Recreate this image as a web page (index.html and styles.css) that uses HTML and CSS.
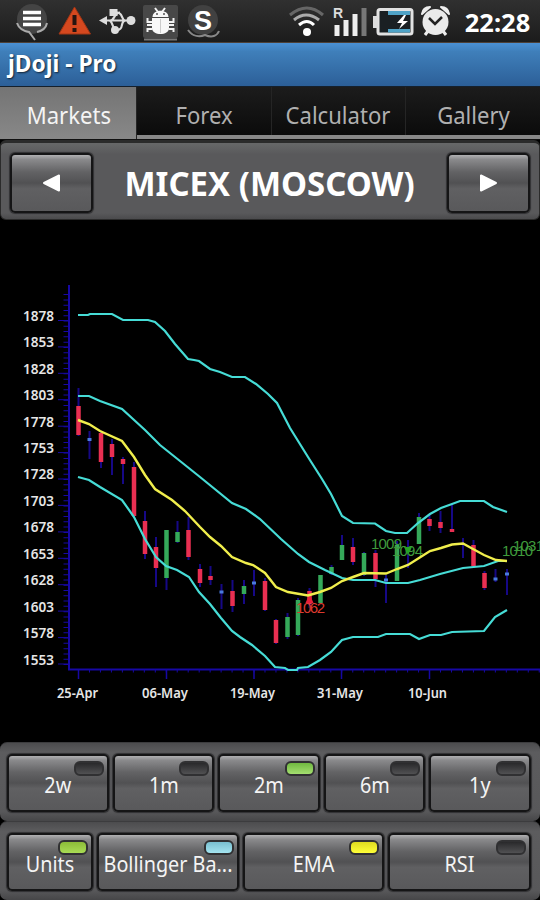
FILE: index.html
```html
<!DOCTYPE html>
<html lang="en">

<head>
    <meta charset="UTF-8">
    <meta name="viewport" content="width=device-width, initial-scale=1.0">
    <title>jDoji - Pro</title>
    <link rel="stylesheet" href="styles.css">
</head>

<body>
    <div class="status-bar">
        <svg class="status-icons" width="240" height="42" viewBox="0 0 240 42">
            <!-- message -->
            <circle cx="32" cy="19" r="15" fill="#444"/>
            <path d="M23 12.500h18M23 18.500h18M23 24.500h18" stroke="#fff" stroke-width="3.500"/>
            <path d="M17 23c2 6 6 8 12 9l6 8M47 23c-1 5-5 8-10 9" fill="none" stroke="#aaa" stroke-width="2"/>
            <!-- warning -->
            <path d="M74.500 7L90.500 34H59z" fill="#d5481f" stroke="#a33614" stroke-linejoin="round"/>
            <path d="M74.500 15v10M74.500 28v4" stroke="#281410" stroke-width="4"/>
            <!-- usb -->
            <path d="M103 20.500h28M110 20.500c5 0 4-8 10-8M109 20.500c4 0 3 9.500 8 9.500c8 0 2-9 9-9.500M117 12.500c6 0 4 7 8 8" fill="none" stroke="#ddd" stroke-width="2.200"/>
            <path d="M99 20.500l8-4.500v9z" fill="#ddd"/>
            <rect x="109.500" y="9" width="8" height="7" fill="#ddd"/>
            <circle cx="115" cy="30" r="4" fill="#ddd"/>
            <circle cx="131" cy="20.500" r="4.500" fill="#ddd"/>
            <!-- debugging -->
            <rect x="143" y="5" width="35" height="33" rx="2" fill="#484848"/>
            <path d="M144 39.500h33" stroke="#777" stroke-width="2"/>
            <path d="M155 8l3 4M165 8l-3 4M147.500 18v4h5M147 25h5M147.500 32v-3h5M173.500 18v4h-5M174 25h-5M173.500 32v-3h-5" fill="none" stroke="#f4f4f4" stroke-width="2"/>
            <path d="M152.500 17c0-8.500 16-8.500 16 0zM152 18h17v10c0 8-17 8-17 0z" fill="#f8f8f8"/>
            <path d="M160.500 19v14" stroke="#ccc"/>
            <circle cx="157" cy="14" r="1" fill="#555"/><circle cx="164" cy="14" r="1" fill="#555"/>
            <!-- skype -->
            <circle cx="203" cy="20" r="15" fill="#414141"/>
            <path d="M188 30c5 7 12 7 17 5 7 3 12 1 14-4" fill="none" stroke="#888" stroke-width="2"/>
            <text x="203" y="30" class="skype" text-anchor="middle">S</text>
        </svg>
        <svg class="status-icons" width="170" height="42" viewBox="285 0 170 42">
            <!-- wifi -->
            <g fill="none" stroke-width="3">
                <path d="M290 15q17-14 33 0" stroke="#666"/>
                <path d="M294 20q12-10 25 0" stroke="#aaa"/>
                <path d="M299 25q8-7 15 0" stroke="#fff"/>
            </g>
            <circle cx="307" cy="32" r="4" fill="#fff"/>
            <!-- signal -->
            <text x="333" y="18" class="roaming">R</text>
            <path d="M337 25v11M346 20v16M355 14v22" stroke="#eee" stroke-width="5"/>
            <path d="M364 8v28" stroke="#777" stroke-width="5"/>
            <!-- battery -->
            <rect x="378" y="9.500" width="34" height="24.500" rx="2" fill="#1a2023" stroke="#e2e2e2" stroke-width="3"/>
            <path d="M378 16h-5v12h5" fill="#ddd"/>
            <path d="M388 11h22v4h-22zM388 29h22v3.500h-22z" fill="#4fa3c7"/>
            <path d="M404 15l-7 8h5l-3 6 9-8h-5l3-6z" fill="#fff"/>
            <!-- alarm -->
            <path d="M422 14q1-7 8-7zM449 14q-1-7-8-7z" fill="#eee" stroke="#eee" stroke-width="2" stroke-linejoin="round"/>
            <path d="M428 31l-3 4M443 31l3 4" stroke="#eee" stroke-width="3"/>
            <circle cx="435.500" cy="22" r="13" fill="#eaeaea"/>
            <path d="M429 18l6 6 7-7" fill="none" stroke="#222" stroke-width="2.500"/>
        </svg>
        <span class="clock">22:28</span>
    </div>

    <div class="title-bar"><span>jDoji - Pro</span></div>

    <nav class="tabs">
        <a class="tab active"><span>Markets</span></a>
        <a class="tab"><span>Forex</span></a>
        <a class="tab"><span>Calculator</span></a>
        <a class="tab"><span>Gallery</span></a>
    </nav>

    <header class="market">
        <button class="btn arrow">
            <svg width="22" height="20" viewBox="0 0 22 20"><path d="M3 10L18 2.500v15z"/></svg>
        </button>
        <h1><span>MICEX (MOSCOW)</span></h1>
        <button class="btn arrow">
            <svg width="22" height="20" viewBox="0 0 22 20"><path d="M19 10L4 2.500v15z"/></svg>
        </button>
    </header>

    <svg class="chart" width="540" height="522" viewBox="0 220 540 522">
        <!-- axes -->
        <g class="axis">
            <path d="M69 285V669.500H540" stroke-width="2"/>
            <path d="M58 320.500h11M58 346.900h11M58 373.300h11M58 399.700h11M58 426.200h11M58 452.600h11M58 479h11M58 505.400h11M58 531.900h11M58 558.300h11M58 584.700h11M58 611.100h11M58 637.600h11M58 664h11"/>
            <path d="M66 294.100V669" stroke-width="5" stroke-dasharray="1 4.284"/>
            <path d="M78.500 670v9M166.500 670v9M254 670v9M341.500 670v9M429.500 670v9" stroke-width="1.500"/>
            <path d="M78 671H540" stroke-width="3" stroke-dasharray="1 9.970"/>
        </g>
        <g class="labels">
            <text x="23" y="320.500" textLength="31" lengthAdjust="spacingAndGlyphs">1878</text>
            <text x="23" y="347" textLength="31" lengthAdjust="spacingAndGlyphs">1853</text>
            <text x="23" y="373.500" textLength="31" lengthAdjust="spacingAndGlyphs">1828</text>
            <text x="23" y="400" textLength="31" lengthAdjust="spacingAndGlyphs">1803</text>
            <text x="23" y="426.500" textLength="31" lengthAdjust="spacingAndGlyphs">1778</text>
            <text x="23" y="453" textLength="31" lengthAdjust="spacingAndGlyphs">1753</text>
            <text x="23" y="479" textLength="31" lengthAdjust="spacingAndGlyphs">1728</text>
            <text x="23" y="505.500" textLength="31" lengthAdjust="spacingAndGlyphs">1703</text>
            <text x="23" y="532" textLength="31" lengthAdjust="spacingAndGlyphs">1678</text>
            <text x="23" y="558.500" textLength="31" lengthAdjust="spacingAndGlyphs">1653</text>
            <text x="23" y="584.500" textLength="31" lengthAdjust="spacingAndGlyphs">1628</text>
            <text x="23" y="611.500" textLength="31" lengthAdjust="spacingAndGlyphs">1603</text>
            <text x="23" y="637.500" textLength="31" lengthAdjust="spacingAndGlyphs">1578</text>
            <text x="23" y="664.500" textLength="31" lengthAdjust="spacingAndGlyphs">1553</text>
            <text x="57" y="698" textLength="41" lengthAdjust="spacingAndGlyphs">25-Apr</text>
            <text x="142" y="698" textLength="46" lengthAdjust="spacingAndGlyphs">06-May</text>
            <text x="230" y="698" textLength="45" lengthAdjust="spacingAndGlyphs">19-May</text>
            <text x="317" y="698" textLength="46" lengthAdjust="spacingAndGlyphs">31-May</text>
            <text x="408" y="698" textLength="39" lengthAdjust="spacingAndGlyphs">10-Jun</text>
        </g>

        <!-- candles -->
        <path class="wick" d="M78.500 388v48M89.500 431v28M101 432v36M112 439v36M123 457v27M134 462v56M145 511v48M156 537v50M166.500 530v60M177.500 521v22M188.500 517v43M200 564v23M210.500 566v19M221.500 584v25M232.500 580v32M244 580v24M254 570v26M265 578v33M276 619v25M287.500 613v26M298 598v38M309.500 588v20M320.500 575v29M331.500 565v10M342 535v25M353 538v27M364 552v24M375.500 550v37M386 575v28M397 541v40M408 540v28M419 513v31M429.500 515v16M440.500 511v22M452 504v28M463 538v20M473.500 540v28M484.500 571v19M495.500 569v13M507 569v26"/>
        <path class="down" d="M78.500 406v29M101 433v29M112 444v13M123 459v5M134 467v49M145 521v33M156 547v21M188.500 530v27M200 569v14M210.500 576v4M232.500 591v15M265 581v29M276 620v23M309.500 591v13M353 547v15M375.500 553v26M429.500 519v7M440.500 522v6M452 529v3M473.500 545v21M484.500 573v15"/>
        <path class="up" d="M166.500 530v48M177.500 532v10M244 586v8M287.500 617v20M298 600v35M320.500 575v28M331.500 567v7M342 545v15M364 553v22M397 545v36M408 547v5M419 517v27"/>
        <path class="flat" d="M87.500 439.500h4M219.500 592h4M252 583h4M384 580h4M493.500 579h4M505 574h4"/>

        <!-- signals -->
        <g class="signal">
            <text x="371" y="549" textLength="31">1009</text>
            <text x="392" y="556" textLength="31">1094</text>
            <text x="502" y="556" textLength="31">1010</text>
            <text x="513" y="551" textLength="31">1031</text>
            <text class="sell" x="296" y="613" textLength="29">1062</text>
        </g>
        <path d="M309.500 594l-4 9h8z" fill="#e5203a"/>
        <path d="M408 555l-4-8h8z" fill="#25a225"/>

        <!-- bollinger bands -->
        <g class="band">
            <polyline points="78,315 88,315 90,314 112,314 123,320 148,320 155,322 165,331 175,344 188,359 194,360 199,361 210,369 220,372 232,377 245,377 256,384 268,394 277,403 290,428 308,457 322,479 331,494 342,516 353,523 375,523.500 386,531 395,533 407,533 418,523 430,514 441,508 452,504 460,501 484,501 493,507 507,512"/>
            <polyline points="78,396 89,396 100,401 122,409 133,419 145,430 160,445 180,461 200,477 232,503 246,509 260,519 281,539 298,554 309,562 325,570 342,578 353,580 375,580 386,583 408,583 420,580 440,574 463,568 484,566 498,561 507,561"/>
            <polyline points="78,477 89,480 100,487 122,500 134,517 145,539 156,557 166,566 177,570 189,577 199,592 210,604 221,618 232,631 240,637 252,645 265,656 275,667 285,668 288,670 297,670 298,668 308,667 320,660 331,652 342,640 353,637 378,637 386,634 410,634 419,639 430,635 441,635 452,632 484,631 495,617 507,610"/>
        </g>
        <polyline class="ema" points="78,420 89,424 100,431 122,441 134,457 145,475 155,489 172,500 185,511 200,527 210,537 221,546 232,557 246,563 253,565 265,573 276,587 288,592 308,595.500 320,592 331,588 342,581 353,577 364,573 386,573.500 397,569 408,565 419,558 430,551 441,548 452,544.500 463,543.500 473,549 484,555 496,560 507,561"/>
    </svg>

    <div class="panel range">
        <button class="btn"><i class="led"></i><span>2w</span></button>
        <button class="btn"><i class="led"></i><span>1m</span></button>
        <button class="btn"><i class="led green"></i><span>2m</span></button>
        <button class="btn"><i class="led"></i><span>6m</span></button>
        <button class="btn"><i class="led"></i><span>1y</span></button>
    </div>
    <div class="panel overlays">
        <button class="btn"><i class="led lime"></i><span>Units</span></button>
        <button class="btn"><i class="led blue"></i><span>Bollinger Ba...</span></button>
        <button class="btn"><i class="led yellow"></i><span>EMA</span></button>
        <button class="btn"><i class="led"></i><span>RSI</span></button>
    </div>
</body>

</html>
```
FILE: styles.css
```css
* {
    box-sizing: border-box;
}

body {
    margin: 0;
    width: 540px;
    height: 900px;
    overflow: hidden;
    background-color: #000;
    color: #f2f2f2;
    font-family: "Noto Sans", "Open Sans", sans-serif;
}

/* Labels are set slightly condensed */
span {
    display: inline-block;
    white-space: nowrap;
    transform: scaleX(0.92);
}

.status-bar {
    display: flex;
    align-items: center;
    height: 42px;
    padding-right: 10px;
    background: linear-gradient(#303030, #1c1c1c);
}

.status-icons {
    flex-shrink: 0;
}

.status-icons + .status-icons {
    margin-left: 45px;
}

.skype {
    font: bold 27px "Liberation Sans", sans-serif;
    fill: #fff;
}

.roaming {
    font: bold 14px "Liberation Sans", sans-serif;
    fill: #ddd;
}

.clock {
    margin-left: auto;
    font-size: 25px;
    font-weight: bold;
    line-height: 42px;
    color: #fff;
    transform: translateY(1px) scaleX(1.02);
    transform-origin: right;
}

.title-bar {
    height: 45px;
    padding-left: 8px;
    border-top: 1px solid #4c4038;
    border-bottom: 1px solid #15202c;
    background: linear-gradient(#4a90d4, #3f7fba 20%, #2c5f98);
    font-size: 23px;
    font-weight: bold;
    line-height: 41px;
    color: #fff;
    text-shadow: 1px 1px 2px #123;
}

.title-bar span {
    transform: scaleX(0.99);
    transform-origin: left;
}

.tabs {
    display: flex;
    height: 53px;
    border-bottom: 1px solid #111;
    background-color: #888;
}

.tab {
    flex: 1;
    height: 48px;
    border-right: 1px solid #252525;
    background: linear-gradient(#1c1c1c, #0b0b0b);
    font-size: 24px;
    line-height: 56px;
    text-align: center;
    color: #b0b0b0;
}

.tab.active {
    height: 52px;
    padding-left: 2px;
    background: linear-gradient(#747474, #888);
    color: #f4f4f4;
}

.tab:last-child {
    border-right: none;
}

.market {
    display: flex;
    justify-content: space-between;
    align-items: center;
    height: 80px;
    padding: 4px 9px 0;
    border: 1px solid #2b2b2b;
    border-top: 3px solid #2b2b2b;
    border-radius: 6px;
    background: linear-gradient(#676869, #59595b 15%, #59595b 92%, #4b4b4d);
}

.market h1 {
    margin: 0;
    font-size: 34px;
    line-height: 60px;
    color: #fff;
}

.market h1 span {
    margin: 0 -30px;
    transform: scaleX(0.97);
}

.btn {
    position: relative;
    padding: 0;
    border: 2px solid #151516;
    border-radius: 5px;
    background: linear-gradient(#b0b0b2, #8a8a8c 8%, #636365 30%, #515153 50%, #606062 60%, #59595b);
    box-shadow: 0 0 1px 1px #303032;
    color: #f4f4f4;
    font-family: inherit;
    font-size: 22px;
}

.arrow {
    width: 83px;
    height: 60px;
}

.arrow svg {
    display: block;
    margin: auto;
    fill: #fff;
    stroke: #fff;
    stroke-width: 2;
    stroke-linejoin: round;
}

.chart {
    display: block;
}

.axis {
    fill: none;
    stroke: #1708a4;
}

.labels {
    font-size: 13.5px;
    font-weight: 600;
    fill: #e6e6e6;
}

.wick {
    fill: none;
    stroke: #160886;
    stroke-width: 2;
}

.down {
    fill: none;
    stroke: #e92f52;
    stroke-width: 4.5;
}

.up {
    fill: none;
    stroke: #35a95a;
    stroke-width: 4.5;
}

.flat {
    fill: none;
    stroke: #4a7bdd;
    stroke-width: 3;
}

.signal {
    font-family: "Liberation Sans", sans-serif;
    font-size: 15px;
    fill: #3f9b3c;
}

.signal .sell {
    fill: #db3a2e;
}

.band polyline {
    fill: none;
    stroke: #46dcd6;
    stroke-width: 2.2;
}

.ema {
    fill: none;
    stroke: #f0ee4c;
    stroke-width: 2.4;
}

.panel {
    display: grid;
    gap: 4px;
    height: 79px;
    padding: 11px 9px 10px 7px;
    border: 0 solid #3c3c3e;
    border-top-width: 1px;
    border-radius: 7px;
    background: linear-gradient(#4c4c4e, #5c5c5e 12%, #58585a 88%, #464648);
}

.panel .btn {
    height: 58px;
    min-width: 0;
    line-height: 56px;
}

.panel .btn span {
    display: block;
    text-align: center;
    margin: 0 -20px;
    transform: scaleX(0.9);
}

.range {
    grid-template-columns: repeat(5, 1fr);
}

.overlays {
    grid-template-columns: 86px 142px 141px 1fr;
}

.led {
    position: absolute;
    top: 5px;
    right: 3px;
    width: 30px;
    height: 15px;
    border: 2px solid #303032;
    border-radius: 6px;
    background: linear-gradient(#29292b, #515153);
}

.led.green {
    background: linear-gradient(#70b840, #a4df70);
}

.led.lime {
    background: linear-gradient(#8cbc38, #a9dc55);
}

.led.blue {
    background: linear-gradient(#79bfd0, #a4e4f0);
}

.led.yellow {
    background: linear-gradient(#dedb20, #ffff38);
}
```
